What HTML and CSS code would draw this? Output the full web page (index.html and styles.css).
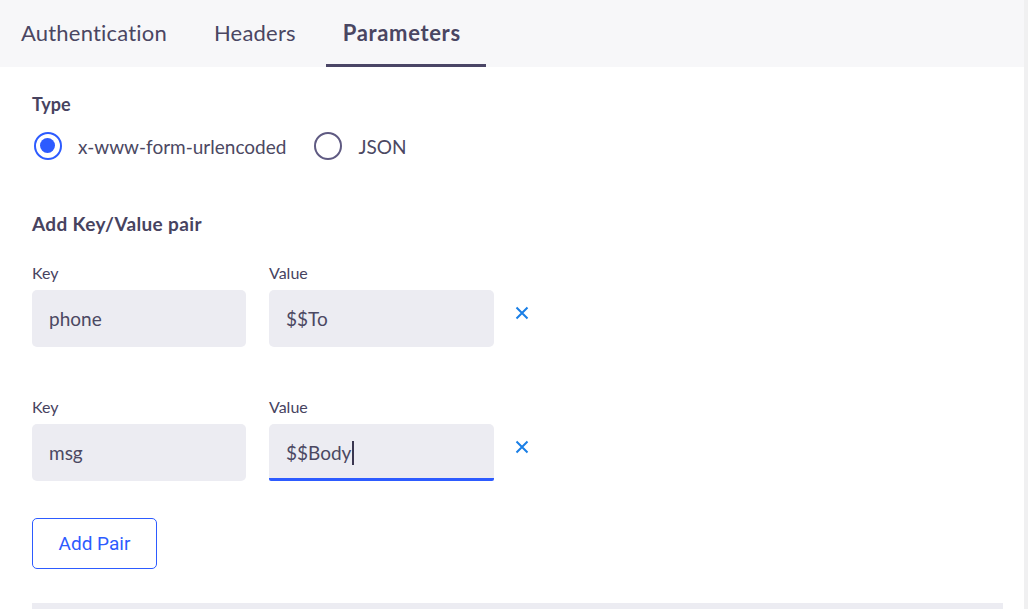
FILE: index.html
```html
<!DOCTYPE html>
<html>
<head>
<meta charset="utf-8">
<link rel="stylesheet" href="styles.css">
</head>
<body>
<div class="page">
  <nav class="tabs">
    <div class="tab">Authentication</div>
    <div class="tab">Headers</div>
    <div class="tab active">Parameters</div>
  </nav>
  <main class="content">
    <div class="section-title">Type</div>
    <div class="radios">
      <label class="radio">
        <span class="dot checked"></span>
        <span class="radio-text">x-www-form-urlencoded</span>
      </label>
      <label class="radio">
        <span class="dot"></span>
        <span class="radio-text">JSON</span>
      </label>
    </div>
    <div class="section-title pairs-title">Add Key/Value pair</div>
    <div class="pair">
      <div class="field key">
        <div class="label">Key</div>
        <div class="input">phone</div>
      </div>
      <div class="field value">
        <div class="label">Value</div>
        <div class="input">$$To</div>
      </div>
      <div class="remove">
        <svg width="14" height="14" viewBox="0 0 14 14"><path d="M1.5 1.5 L12.5 12.5 M12.5 1.5 L1.5 12.5" stroke="#1a7fe6" stroke-width="2" fill="none"/></svg>
      </div>
    </div>
    <div class="pair second">
      <div class="field key">
        <div class="label">Key</div>
        <div class="input">msg</div>
      </div>
      <div class="field value">
        <div class="label">Value</div>
        <div class="input focused">$$Body<span class="caret"></span></div>
      </div>
      <div class="remove">
        <svg width="14" height="14" viewBox="0 0 14 14"><path d="M1.5 1.5 L12.5 12.5 M12.5 1.5 L1.5 12.5" stroke="#1a7fe6" stroke-width="2" fill="none"/></svg>
      </div>
    </div>
    <button class="add-btn">Add Pair</button>
    <div class="separator"></div>
  </main>
  <div class="scrollbar"></div>
</div>
</body>
</html>
```

FILE: styles.css
```css
* { box-sizing: border-box; }
html, body {
  margin: 0;
  padding: 0;
  background: #ffffff;
  overflow: hidden;
}
body {
  font-family: "Lato", "Open Sans", sans-serif;
  color: #47435f;
}
.page {
  position: relative;
  width: 1028px;
  height: 609px;
  padding-right: 4px;
}
.scrollbar {
  position: absolute;
  top: 0;
  right: 0;
  width: 4px;
  height: 609px;
  background: #f0f0f1;
}
.tabs {
  display: flex;
  height: 67px;
  background: #f7f7f9;
  padding-left: 4px;
}
.tab {
  height: 67px;
  padding: 0 25px 0 17px;
  margin-right: 5px;
  display: flex;
  align-items: center;
  font-size: 22px;
  letter-spacing: 0.2px;
  color: #4a4662;
  border-bottom: 3px solid transparent;
  padding-top: 1px;
}
.tab.active {
  font-weight: 700;
  letter-spacing: 0.65px;
  border-bottom-color: #4a4566;
}
.content {
  padding: 27px 0 0 32px;
}
.section-title {
  font-size: 18px;
  line-height: 20px;
  font-weight: 700;
  color: #47435f;
}
.radios {
  display: flex;
  margin-top: 19px;
  height: 26px;
  align-items: center;
}
.radio {
  display: flex;
  align-items: center;
  margin-right: 26px;
}
.dot {
  width: 28px;
  height: 28px;
  border-radius: 50%;
  border: 2.5px solid #5f5a82;
  margin-left: 2px;
  margin-right: 16px;
  position: relative;
}
.dot.checked {
  border-color: #2d5bff;
}
.dot.checked::after {
  content: "";
  position: absolute;
  left: 4px;
  top: 4px;
  width: 15px;
  height: 15px;
  border-radius: 50%;
  background: #2d5bff;
}
.radio-text {
  font-size: 19px;
  color: #4b4862;
}
.pairs-title {
  margin-top: 55px;
  font-size: 19px;
  letter-spacing: 0.35px;
}
.pair {
  display: flex;
  align-items: flex-end;
  margin-top: 30px;
}
.pair.second {
  margin-top: 51px;
}
.field.key { width: 214px; margin-right: 23px; }
.field.value { width: 225px; }
.label {
  font-size: 16px;
  line-height: 18px;
  color: #47435f;
  margin-bottom: 8px;
}
.input {
  height: 57px;
  background: #ececf2;
  border-radius: 5px;
  padding-left: 17px;
  display: flex;
  align-items: center;
  font-size: 19px;
  color: #4b4862;
}
.input.focused {
  border-bottom: 3px solid #2d5bff;
  padding-top: 3px;
  border-radius: 5px 5px 2px 2px;
}
.caret {
  display: inline-block;
  width: 1.5px;
  height: 24px;
  background: #3a3650;
  margin-left: 1px;
}
.remove {
  width: 14px;
  height: 14px;
  margin: 0 0 27px 21px;
  align-self: flex-end;
}
.remove svg { display: block; }
.add-btn {
  display: block;
  margin-top: 37px;
  width: 125px;
  height: 51px;
  border: 1.5px solid #2d5bff;
  border-radius: 5px;
  background: #ffffff;
  color: #2d5bff;
  font-family: "Roboto", "Liberation Sans", sans-serif;
  font-size: 19px;
  padding: 0;
}
.separator {
  margin-top: 34px;
  width: 971px;
  height: 6px;
  background: #ececf2;
}
```
